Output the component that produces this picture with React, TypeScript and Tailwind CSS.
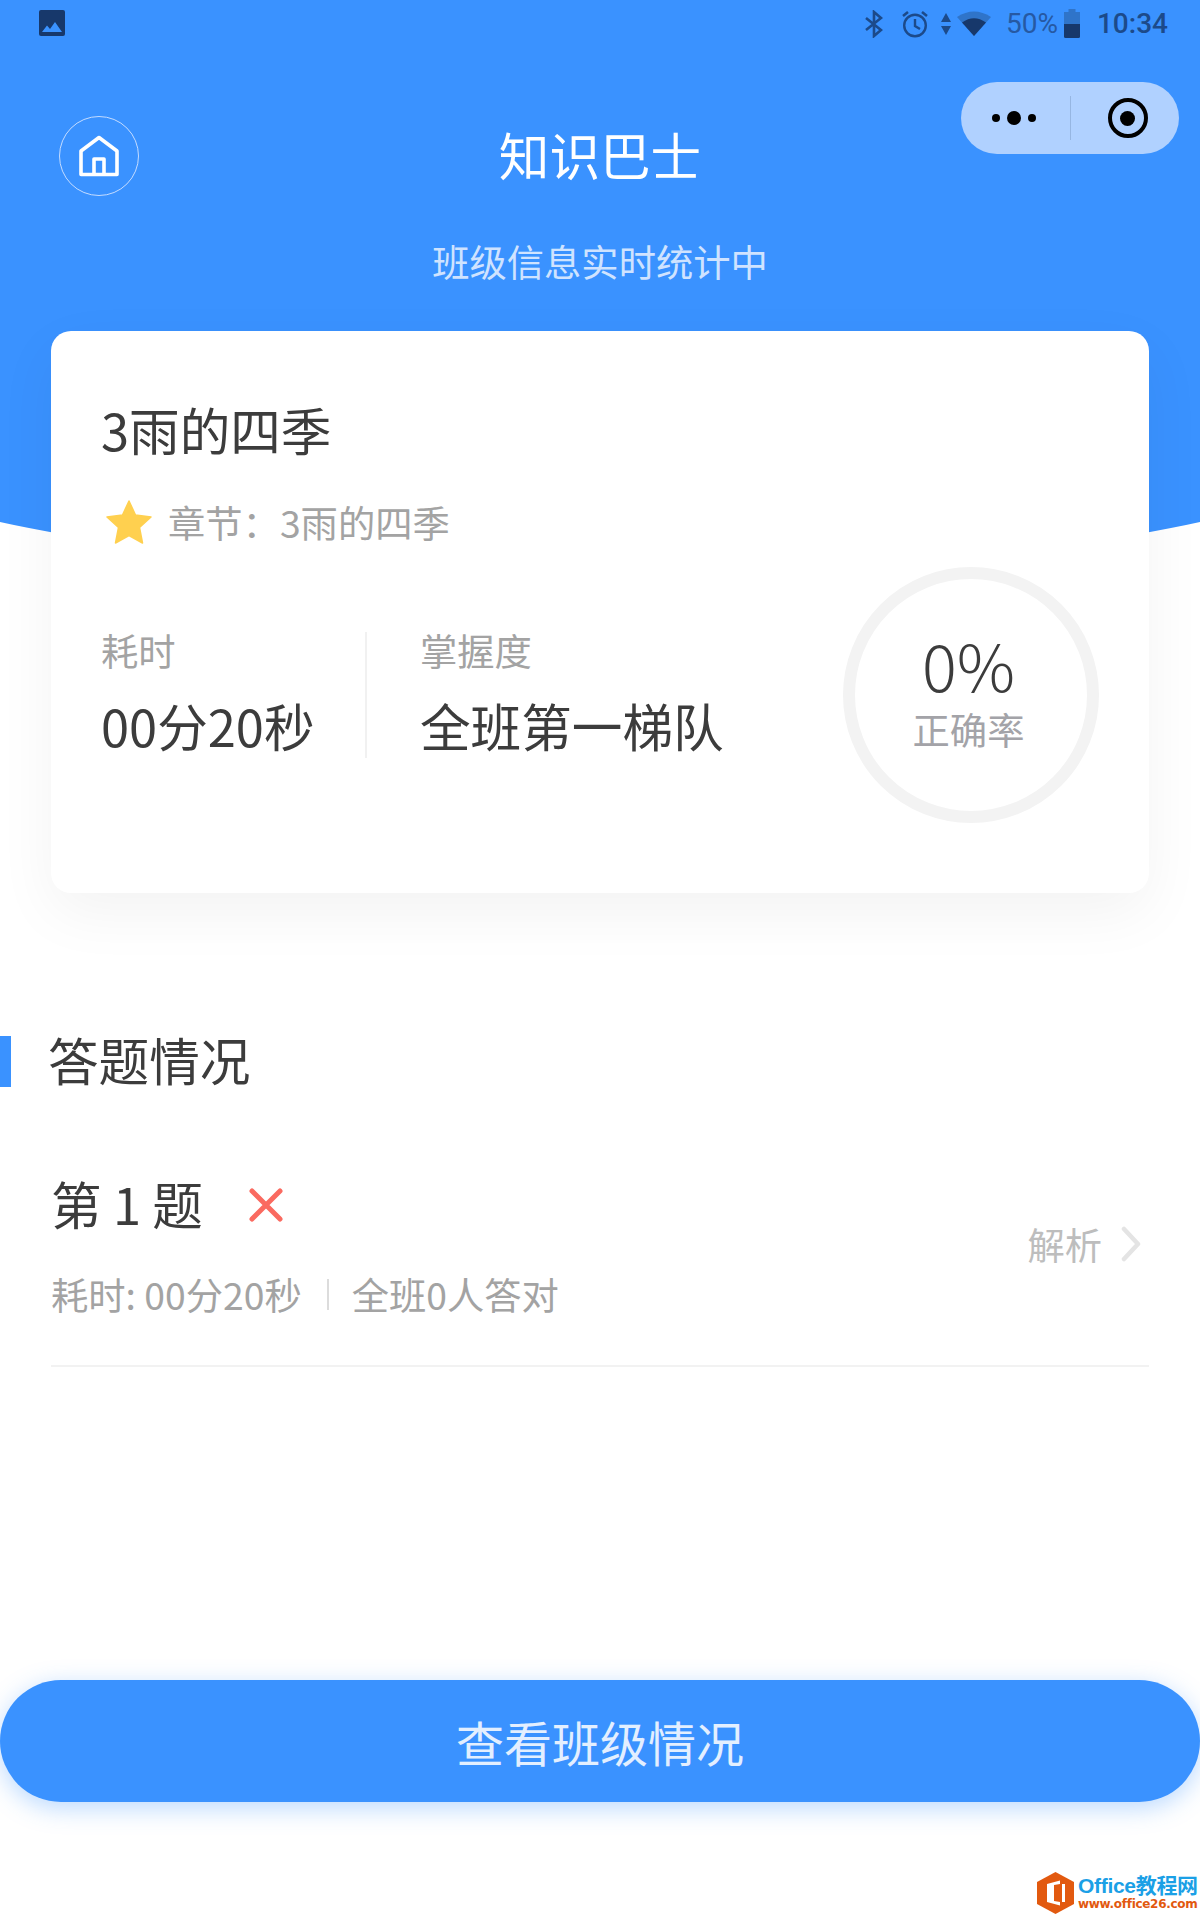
import React from 'react';

const cjk = { fontFamily: '"Noto Sans CJK SC", "Noto Sans", sans-serif' };

function StatusBar() {
  return (
    <div className="flex h-[48px] items-center pl-[39px] pr-[32px]">
      {/* gallery notification */}
      <svg width="26" height="26" viewBox="0 0 26 26" className="mb-[2px]">
        <rect width="26" height="26" rx="2" fill="#17386b" />
        <path d="M3 22 L8 15.5 L11 19 L16 12 L23 22 Z" fill="#3a92ff" />
      </svg>
      <div className="ml-auto flex items-center text-[#1c4a8a]">
        {/* bluetooth */}
        <svg width="18" height="28" viewBox="0 0 18 28" fill="none" stroke="#1c4a8a" strokeWidth="2.6" className="mb-[1px]">
          <path d="M1 8 L16 20 L9 26 V2 L16 8 L1 20" />
        </svg>
        {/* alarm */}
        <svg width="28" height="28" viewBox="0 0 28 28" fill="none" stroke="#1c4a8a" strokeWidth="2.4" className="ml-[18px]">
          <circle cx="14" cy="15.5" r="10.8" />
          <path d="M14 9 V16 L19 19" />
          <path d="M2 6 L7 2 M26 6 L21 2" strokeWidth="2.6" />
        </svg>
        {/* data arrows */}
        <svg width="10" height="22" viewBox="0 0 10 22" fill="#1c4a8a" className="ml-[12px]">
          <path d="M5 0 L10 9 H0 Z M0 13 H10 L5 22 Z" />
        </svg>
        {/* wifi */}
        <svg width="34" height="26" viewBox="0 0 34 26" className="ml-[6px] mb-[2px]">
          <path d="M0 7 Q17 -4 34 7 L17 26 Z" fill="#2f74c9" />
          <path d="M5 12.5 Q17 4 29 12.5 L17 26 Z" fill="#17386b" />
        </svg>
        <span className="ml-[15px] text-[28px] leading-none text-[#2659a3]" style={{ fontFamily: 'Roboto, sans-serif' }}>50%</span>
        {/* battery, half full */}
        <svg width="16" height="29" viewBox="0 0 16 29" className="ml-[6px] mb-[1px]">
          <path d="M4.5 0 H11.5 V3 H16 V15 H0 V3 H4.5 Z" fill="#2f74c9" />
          <path d="M0 15 H16 V27.5 Q16 29 14.5 29 H1.5 Q0 29 0 27.5 Z" fill="#17386b" />
        </svg>
        <span className="ml-[17px] text-[28px] leading-none font-medium text-[#1c4a8a]" style={{ fontFamily: 'Roboto, sans-serif' }}>10:34</span>
      </div>
    </div>
  );
}

function Capsule() {
  return (
    <div className="absolute right-[21px] top-[-34px] flex h-[72px] w-[218px] items-center rounded-full bg-[#b0d1ff]">
      <div className="flex w-[109px] items-center justify-center gap-[7px] pr-[4px]">
        <span className="h-[8px] w-[8px] rounded-full bg-black" />
        <span className="h-[14px] w-[14px] rounded-full bg-black" />
        <span className="h-[8px] w-[8px] rounded-full bg-black" />
      </div>
      <div className="h-[44px] w-[1px] bg-[#96b6e2]" />
      <div className="flex flex-1 items-center justify-center pl-[5px]">
        <div className="flex h-[40px] w-[40px] items-center justify-center rounded-full border-[4px] border-black">
          <span className="h-[15px] w-[15px] rounded-full bg-black" />
        </div>
      </div>
    </div>
  );
}

function Stats() {
  return (
    <div className="mt-[22px] flex h-[256px] items-center">
      <div className="flex h-[126px] w-[266px] flex-col border-r-2 border-[#f1f1f1]">
        <span className="-mt-[2px] text-[37.3px] leading-[40px] text-[#a3a3a3]">耗时</span>
        <span className="mt-[25px] text-[50.6px] leading-[60px] text-[#3c3c3c]">00分20秒</span>
      </div>
      <div className="flex h-[126px] flex-col pl-[53px]">
        <span className="-mt-[2px] text-[37.3px] leading-[40px] text-[#a3a3a3]">掌握度</span>
        <span className="mt-[25px] text-[50.6px] leading-[60px] text-[#3c3c3c]">全班第一梯队</span>
      </div>
      <div className="ml-auto flex h-[256px] w-[256px] flex-col items-center justify-center rounded-full border-[12px] border-[#f3f3f3] pb-[11px] pr-[5px]">
        <span className="text-[65px] leading-[70px] font-light text-[#3c3c3c]">0%</span>
        <span className="mt-[8px] text-[37.3px] leading-[44px] text-[#a3a3a8]">正确率</span>
      </div>
    </div>
  );
}

function QuestionRow() {
  return (
    <div className="mx-[51px] mt-[86px] flex h-[194px] items-start justify-between border-b-2 border-[#f2f2f2]">
      <div>
        <div className="flex h-[60px] items-center">
          <span className="text-[50.6px] leading-[60px] text-[#3c3c3c]">第 1 题</span>
          <svg width="34" height="34" viewBox="0 0 34 34" fill="none" stroke="#fa6a60" strokeWidth="5" strokeLinecap="round" className="ml-[46px] mt-[4px]">
            <path d="M3 3 L31 31 M31 3 L3 31" />
          </svg>
        </div>
        <div className="mt-[41px] flex h-[40px] items-center text-[37.3px] leading-[40px] text-[#a3a3a3]">
          <span>耗时: 00分20秒</span>
          <span className="ml-[25px] h-[31px] w-[2px] bg-[#dcdcdc]" />
          <span className="ml-[23px]">全班0人答对</span>
        </div>
      </div>
      <div className="mt-[51px] flex items-center pr-[8px]">
        <span className="text-[37.3px] leading-[40px] text-[#bdbdbd]">解析</span>
        <svg width="20" height="36" viewBox="0 0 20 36" fill="none" stroke="#e4e4e4" strokeWidth="4.5" strokeLinecap="round" strokeLinejoin="round" className="ml-[19px]">
          <path d="M3 3 L17 18 L3 33" />
        </svg>
      </div>
    </div>
  );
}

function Watermark() {
  return (
    <div className="absolute bottom-[6px] left-[1037px] flex items-center">
      <svg width="37" height="42" viewBox="0 0 37 42">
        <path d="M18.5 0 L37 10 V32 L18.5 42 L0 32 V10 Z" fill="#e2590f" />
        <path d="M10 12 L23 8.5 V33.5 L10 30 Z M17 13 V29 L23 30 V12 Z M25 12 H28 V30 H25 Z" fill="#fff" fillRule="evenodd" />
      </svg>
      <div className="ml-[4px] flex flex-col">
        <span className="text-[21px] leading-[22px] font-bold tracking-[-0.3px] text-[#1ba0e6]" style={{ fontFamily: '"Liberation Sans", "Noto Sans CJK SC", sans-serif' }}>Office教程网</span>
        <span className="text-[12px] leading-[15px] font-bold tracking-[-0.3px] text-[#e2590f]" style={{ fontFamily: '"DejaVu Sans", sans-serif' }}>www.office26.com</span>
      </div>
    </div>
  );
}

export default function App() {
  return (
    <div className="relative flex h-[1920px] w-[1200px] flex-col overflow-hidden bg-white" style={cjk}>
      {/* curved blue backdrop behind the header and the top of the card */}
      <div className="absolute left-[-300px] top-0 h-[578px] w-[1800px] rounded-b-[900px_220px] bg-[#3a92ff]" />

      <div className="relative flex flex-1 flex-col">
        <StatusBar />

        <div className="relative mt-[68px] flex h-[80px] items-center justify-center">
          <div className="absolute left-[59px] top-0 flex h-[80px] w-[80px] items-center justify-center rounded-full border border-[#c4dcff]">
            <svg width="40" height="42" viewBox="0 0 40 42" fill="none" stroke="#fff" strokeWidth="3.6" strokeLinejoin="round">
              <path d="M2 39.5 V16 L20 2.5 L38 16 V39.5 Z" />
              <path d="M15 39.5 V24 H25 V39.5" />
            </svg>
          </div>
          <h1 className="mb-[5px] text-[50.6px] leading-[60px] font-normal text-white">知识巴士</h1>
          <Capsule />
        </div>

        <p className="mt-[43px] text-center text-[37.3px] leading-[44px] text-[#cfe3ff]">班级信息实时统计中</p>

        {/* summary card */}
        <div className="mx-[51px] mt-[48px] h-[562px] rounded-[20px] bg-white px-[50px] pt-[68px] shadow-[0_20px_60px_rgba(0,0,0,0.05)]">
          <h2 className="text-[50.6px] leading-[60px] font-normal text-[#3c3c3c]">3雨的四季</h2>
          <div className="mt-[40px] flex h-[46px] items-center">
            <svg width="46" height="44" viewBox="0 0 46 44" className="ml-[5px]">
              <path d="M23 1 L29.5 15 L45 17 L33.5 27.5 L36.5 43 L23 35.5 L9.5 43 L12.5 27.5 L1 17 L16.5 15 Z" fill="#ffd04f" stroke="#ffd04f" strokeWidth="1.5" strokeLinejoin="round" />
            </svg>
            <span className="ml-[16px] text-[37.3px] leading-[44px] text-[#a3a3a3]">章节：3雨的四季</span>
          </div>
          <Stats />
        </div>

        {/* answers section */}
        <div className="mt-[143px] flex h-[51px] items-center">
          <span className="h-[51px] w-[11px] bg-[#3a92ff]" />
          <h3 className="mb-[6px] ml-[37px] text-[50.6px] leading-[60px] font-normal text-[#3c3c3c]">答题情况</h3>
        </div>
        <QuestionRow />

        <div className="mt-auto mb-[118px] flex h-[122px] items-center justify-center rounded-full bg-[#3a92ff] text-[48px] leading-[60px] text-[#e3efff] shadow-[0_6px_24px_rgba(58,146,255,0.35)]">
          查看班级情况
        </div>
      </div>

      <Watermark />
    </div>
  );
}
